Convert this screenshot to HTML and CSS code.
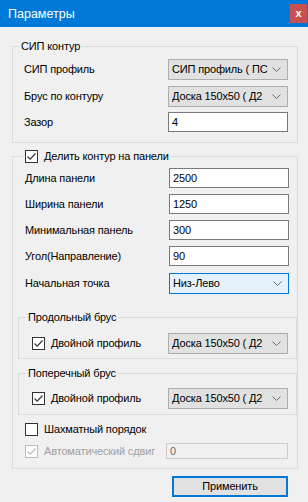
FILE: index.html
```html
<!DOCTYPE html>
<html>
<head>
<meta charset="utf-8">
<title>Параметры</title>
<link rel="stylesheet" href="styles.css">
</head>
<body>
<div class="window">
  <div class="titlebar">
    <span class="title">Параметры</span>
    <span class="close">x</span>
  </div>

  <div class="client">

    <!-- контур -->
    <fieldset class="group group-contour">
      <legend>СИП контур</legend>
      <div class="row row-combo">
        <span class="label">СИП профиль</span>
        <div class="combo"><span class="combo-text">СИП профиль ( ПС</span><svg class="chevron" width="9" height="5" viewBox="0 0 9 5"><path d="M0.5 0.5 L4.5 4.5 L8.5 0.5" fill="none" stroke="#6a6a6a" stroke-width="1"/></svg></div>
      </div>
      <div class="row row-combo">
        <span class="label">Брус по контуру</span>
        <div class="combo"><span class="combo-text">Доска 150x50 ( Д2</span><svg class="chevron" width="9" height="5" viewBox="0 0 9 5"><path d="M0.5 0.5 L4.5 4.5 L8.5 0.5" fill="none" stroke="#6a6a6a" stroke-width="1"/></svg></div>
      </div>
      <div class="row row-edit">
        <span class="label">Зазор</span>
        <div class="edit">4</div>
      </div>
    </fieldset>

    <!-- панели -->
    <fieldset class="group group-panels">
      <legend><span class="check checked"><svg width="11" height="11" viewBox="0 0 11 11"><path d="M1.5 5.5 L4.2 8.2 L9.5 2.5" fill="none" stroke="#333" stroke-width="1.2"/></svg></span>Делить контур на панели</legend>

      <div class="row row-edit first">
        <span class="label">Длина панели</span>
        <div class="edit">2500</div>
      </div>
      <div class="row row-edit">
        <span class="label">Ширина панели</span>
        <div class="edit">1250</div>
      </div>
      <div class="row row-edit">
        <span class="label">Минимальная панель</span>
        <div class="edit">300</div>
      </div>
      <div class="row row-edit">
        <span class="label">Угол(Направление)</span>
        <div class="edit">90</div>
      </div>
      <div class="row row-combo">
        <span class="label">Начальная точка</span>
        <div class="combo focused"><span class="combo-text">Низ-Лево</span><svg class="chevron" width="9" height="5" viewBox="0 0 9 5"><path d="M0.5 0.5 L4.5 4.5 L8.5 0.5" fill="none" stroke="#6a6a6a" stroke-width="1"/></svg></div>
      </div>

      <fieldset class="group subgroup sub-long">
        <legend>Продольный брус</legend>
        <div class="row row-sub">
          <span class="checkline"><span class="check checked"><svg width="11" height="11" viewBox="0 0 11 11"><path d="M1.5 5.5 L4.2 8.2 L9.5 2.5" fill="none" stroke="#333" stroke-width="1.2"/></svg></span>Двойной профиль</span>
          <div class="combo"><span class="combo-text">Доска 150x50 ( Д2</span><svg class="chevron" width="9" height="5" viewBox="0 0 9 5"><path d="M0.5 0.5 L4.5 4.5 L8.5 0.5" fill="none" stroke="#6a6a6a" stroke-width="1"/></svg></div>
        </div>
      </fieldset>

      <fieldset class="group subgroup sub-cross">
        <legend>Поперечный брус</legend>
        <div class="row row-sub">
          <span class="checkline"><span class="check checked"><svg width="11" height="11" viewBox="0 0 11 11"><path d="M1.5 5.5 L4.2 8.2 L9.5 2.5" fill="none" stroke="#333" stroke-width="1.2"/></svg></span>Двойной профиль</span>
          <div class="combo"><span class="combo-text">Доска 150x50 ( Д2</span><svg class="chevron" width="9" height="5" viewBox="0 0 9 5"><path d="M0.5 0.5 L4.5 4.5 L8.5 0.5" fill="none" stroke="#6a6a6a" stroke-width="1"/></svg></div>
        </div>
      </fieldset>

      <div class="row row-check chess">
        <span class="checkline"><span class="check"></span>Шахматный порядок</span>
      </div>
      <div class="row row-check auto">
        <span class="checkline disabled"><span class="check checked"><svg width="11" height="11" viewBox="0 0 11 11"><path d="M1.5 5.5 L4.2 8.2 L9.5 2.5" fill="none" stroke="#bcbcbc" stroke-width="1.2"/></svg></span>Автоматический сдвиг</span>
        <div class="edit disabled">0</div>
      </div>
    </fieldset>

    <div class="actions">
      <div class="button">Применить</div>
    </div>
  </div>
</div>
</body>
</html>
```

FILE: styles.css
```css
* {box-sizing: border-box;}
html, body {margin: 0; padding: 0;}
body {font-family: "Liberation Sans", Arial, sans-serif; font-size: 11px; letter-spacing: -0.15px; color: #000; background: #f0f0f0;}

.window {width: 308px; height: 502px; background: #f0f0f0; overflow: hidden;}

.titlebar {height: 27px; background: #0078d7; color: #fff; display: flex; align-items: flex-start; justify-content: space-between;}
.title {padding: 6px 0 0 8px; font-size: 12.5px; letter-spacing: 0; line-height: 16px;}
.close {width: 17px; height: 19px; margin: 4px 1px 0 0; background: #c75050; color: #fff; font-weight: bold; font-size: 11px; letter-spacing: 0; line-height: 18px; text-align: center;}

.client {padding: 0 10px 0 12px;}

/* group boxes */
.group {border: 1px solid #dcdcdc; margin: 0; padding: 0; min-width: 0;}
.group legend {padding: 0 2px; line-height: 16px; height: 16px;}

.group-contour {margin-top: 11px; padding: 4px 9px 10px 11px;}
.group-contour legend {margin-left: -5px;}

.group-panels {margin-top: 5px; padding: 4px 0 9px 0;}
.group-panels legend {margin-left: 10px; display: flex; align-items: center;}
.group-panels > .row {padding: 0 8px 0 12px;}

.subgroup {margin-left: 5px; margin-right: 0;}
.subgroup legend {margin-left: -6px;}
.sub-long {margin-top: 15px; padding: 8px 8px 5px 13px;}
.sub-cross {margin-top: 6px; padding: 7px 8px 6px 13px;}

/* rows */
.row {display: flex; align-items: center; justify-content: space-between;}
.row-combo {height: 22px;}
.row-edit {height: 20px;}
.group-contour .row + .row {margin-top: 5px;}
.group-panels .row-edit + .row-edit, .group-panels .row-edit + .row-combo {margin-top: 6px;}
.row-sub {height: 20px;}
.row-check {height: 16px;}
.chess {margin-top: 6px;}
.auto {margin-top: 6px;}
.group-panels > .auto.row {padding-right: 9px;}

.label {white-space: nowrap;}

/* controls */
.combo {width: 120px; height: 21px; border: 1px solid #adadad; background: #e1e1e1; display: flex; align-items: center; justify-content: space-between; padding: 0 6px 0 3px;}
.combo.focused {background: #e5f1fb; border-color: #0078d7;}
.combo-text {white-space: nowrap; overflow: hidden; width: 96px;}
.chevron {flex: none;}

.edit {width: 120px; height: 20px; border: 1px solid #7a7a7a; background: #fff; padding: 0 3px; line-height: 18px;}
.edit.disabled {width: 122px; height: 16px; line-height: 14px; border-color: #cccccc; background: #f0f0f0; color: #6d6d6d;}

.check {width: 13px; height: 13px; border: 1px solid #333; background: #fff; display: inline-flex; align-items: center; justify-content: center; margin-right: 6px; flex: none;}
.checkline {display: flex; align-items: center; white-space: nowrap;}
.checkline.disabled {color: #a0a0a0;}
.checkline.disabled .check {border-color: #bcbcbc;}

.actions {display: flex; justify-content: flex-end; padding-right: 10px; margin-top: 7px;}
.button {width: 116px; height: 21px; border: 2px solid #0078d7; background: #e1e1e1; text-align: center; line-height: 17px;}
```
